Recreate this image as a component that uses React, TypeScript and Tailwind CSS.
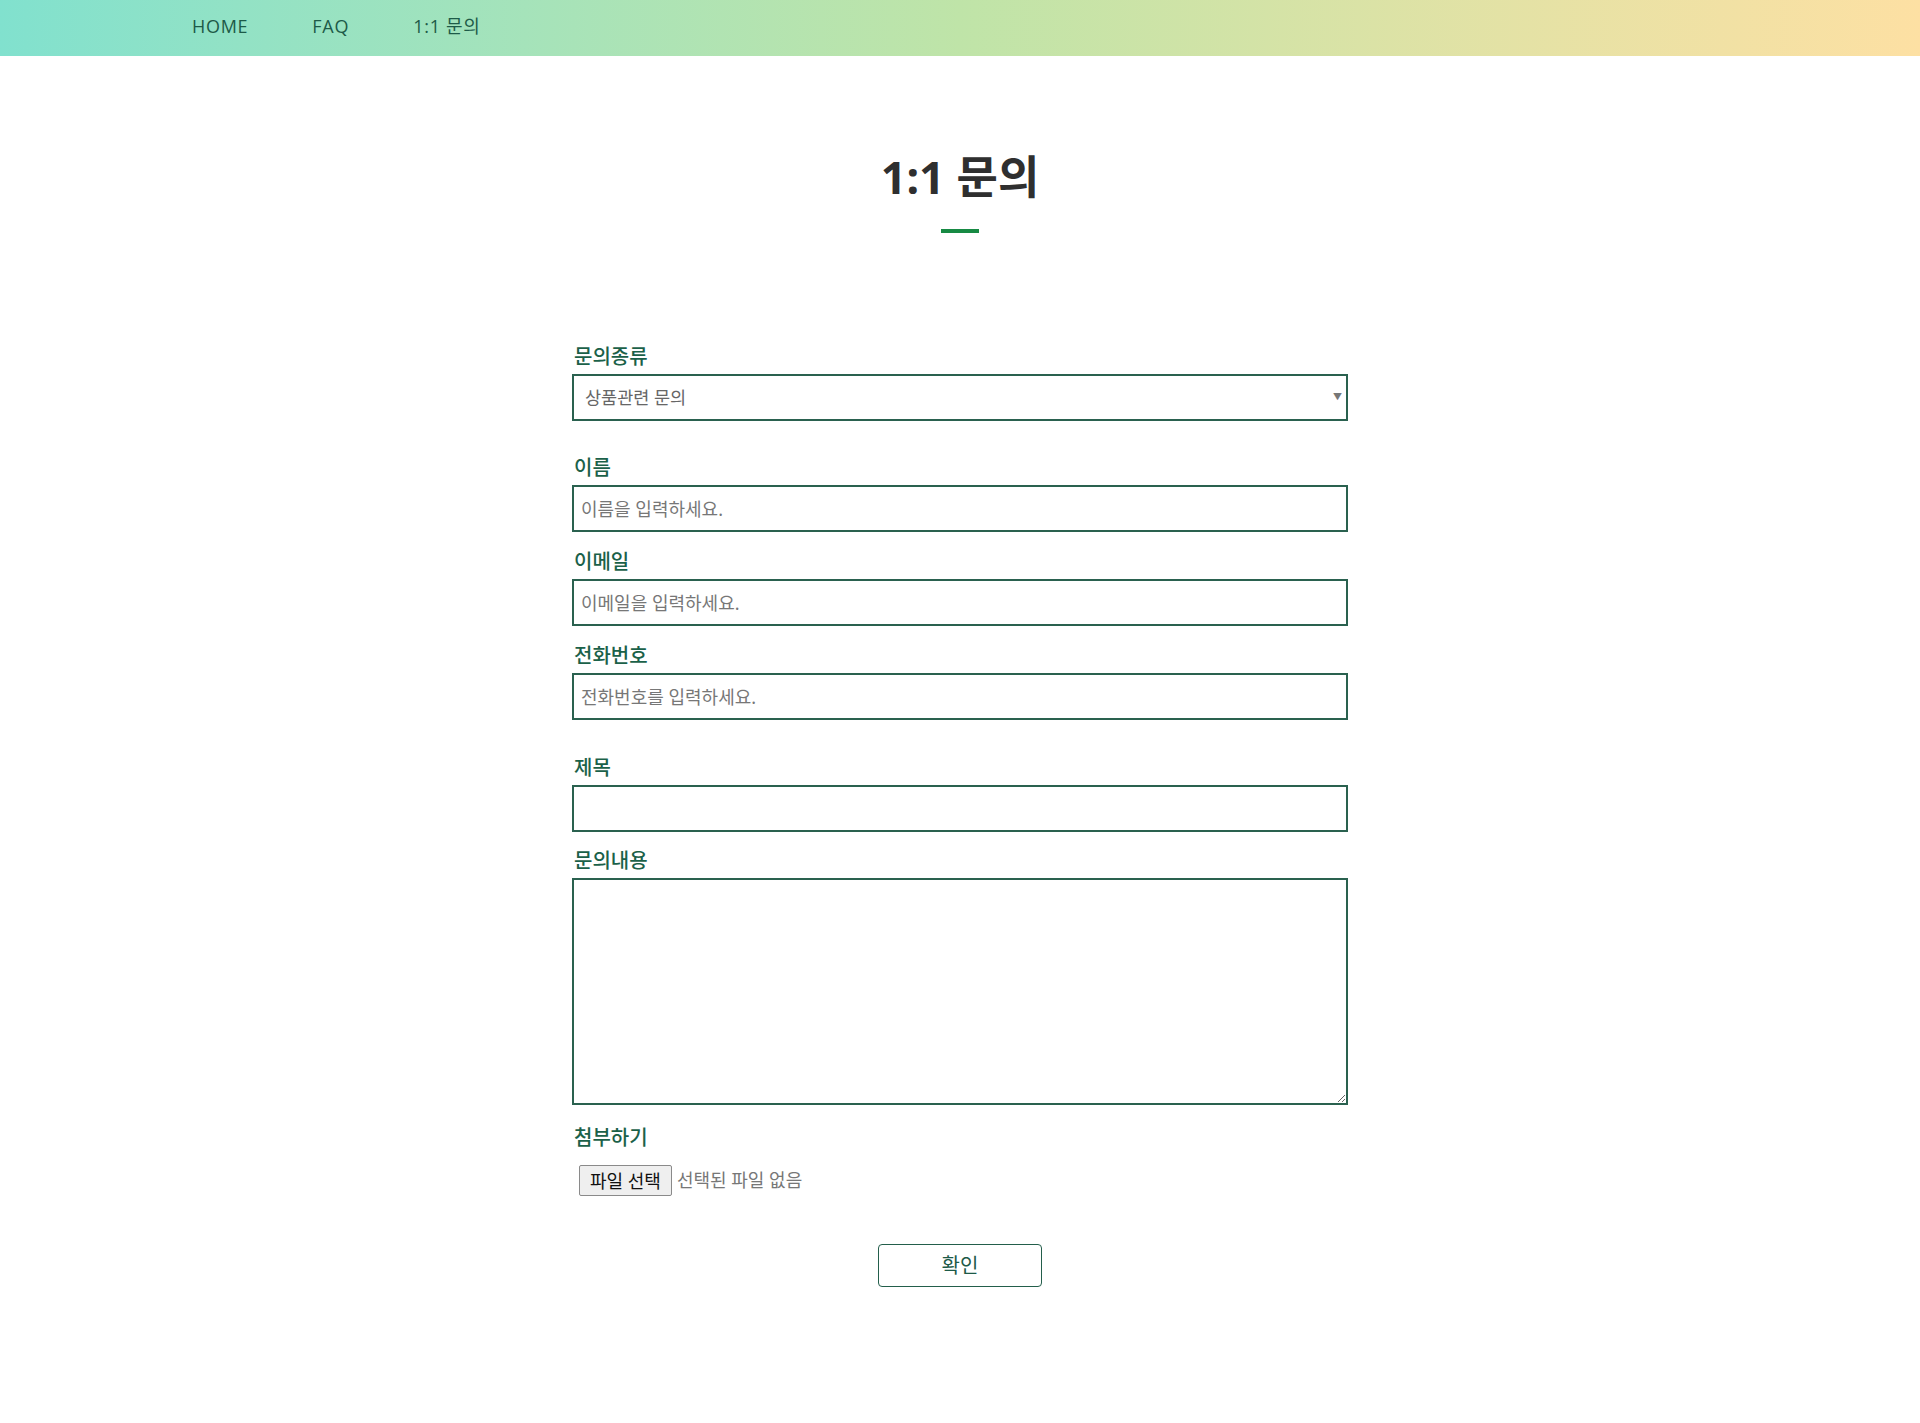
import { useState } from "react";

const navItems = ["HOME", "FAQ", "1:1 문의"];

const labelClass =
  "block pl-[2px] text-[20px] font-medium leading-[24px] text-[#1b6149] mb-[5px]";
const inputClass =
  "block w-full h-[47px] border-2 border-[#2a614f] bg-white px-[7px] text-[18px] text-[#444] placeholder:text-[#777] outline-none";

function Field(props: FieldProps) {
  const { label, placeholder, className } = props;
  return (
    <div className={className}>
      <label className={labelClass}>{label}</label>
      <input type="text" placeholder={placeholder} className={inputClass} />
    </div>
  );
}

function App() {
  const [kind, setKind] = useState("상품관련 문의");

  return (
    <div
      className="min-h-[1423px] bg-white"
      style={{ fontFamily: '"Noto Sans", "Noto Sans CJK KR", sans-serif' }}
    >
      <header className="h-[56px] bg-gradient-to-r from-[#81e1ce] via-[#bfe4a8] to-[#fde0a3]">
        <nav
          className="flex h-full items-center gap-[64px] pb-[4px] pl-[192px] text-[18px] tracking-[0.04em] text-[#1d5a48]"
          style={{ fontFamily: '"Open Sans", "Noto Sans CJK KR", sans-serif' }}
        >
          {navItems.map((item) => (
            <a key={item} href="#" className="leading-none">
              {item}
            </a>
          ))}
        </nav>
      </header>

      <main className="flex flex-col items-center">
        <h1 className="mt-[94px] text-[45px] font-bold leading-[54px] text-[#2f2f2f]">
          1:1 문의
        </h1>
        <div className="mt-[25px] h-[4px] w-[38px] bg-[#178a44]" />

        <form
          className="mt-[112px] w-[776px]"
          onSubmit={(e) => e.preventDefault()}
        >
          <div>
            <label className={labelClass}>문의종류</label>
            <div className="relative">
              <select
                value={kind}
                onChange={(e) => setKind(e.target.value)}
                className="block w-full h-[47px] appearance-none border-2 border-[#2a614f] bg-white pl-[11px] text-[17.5px] text-[#666] outline-none"
              >
                <option>상품관련 문의</option>
                <option>배송관련 문의</option>
                <option>기타 문의</option>
              </select>
              <span className="pointer-events-none absolute right-[6px] top-[18px] text-[9px] leading-none text-[#777]">
                ▼
              </span>
            </div>
          </div>

          <Field
            className="mt-[35px]"
            label="이름"
            placeholder="이름을 입력하세요."
          />
          <Field
            className="mt-[18px]"
            label="이메일"
            placeholder="이메일을 입력하세요."
          />
          <Field
            className="mt-[18px]"
            label="전화번호"
            placeholder="전화번호를 입력하세요."
          />

          <Field className="mt-[36px]" label="제목" placeholder="" />
          <div className="mt-[17px]">
            <label className={labelClass}>문의내용</label>
            <textarea className="block w-full h-[227px] border-2 border-[#2a614f] bg-white p-2 text-[16px] outline-none" />
          </div>

          <div className="mt-[21px]">
            <label className={labelClass}>첨부하기</label>
            <div className="mt-[15px] ml-[7px] flex items-center gap-[5px]">
              <button
                type="button"
                className="h-[31px] rounded-[2px] border border-[#8a8a8a] bg-[#efefef] px-[10px] text-[18px] leading-none text-[#111]"
              >
                파일 선택
              </button>
              <span className="text-[18px] text-[#777]">선택된 파일 없음</span>
            </div>
          </div>

          <div className="mt-[48px] flex justify-center">
            <button
              type="submit"
              className="h-[43px] w-[164px] rounded-[4px] border-[1.5px] border-[#235e4b] bg-white text-[20px] text-[#1d5a48]"
            >
              확인
            </button>
          </div>
        </form>
      </main>
    </div>
  );
}

interface FieldProps {
  label: string;
  placeholder: string;
  className?: string;
}

export default App;
